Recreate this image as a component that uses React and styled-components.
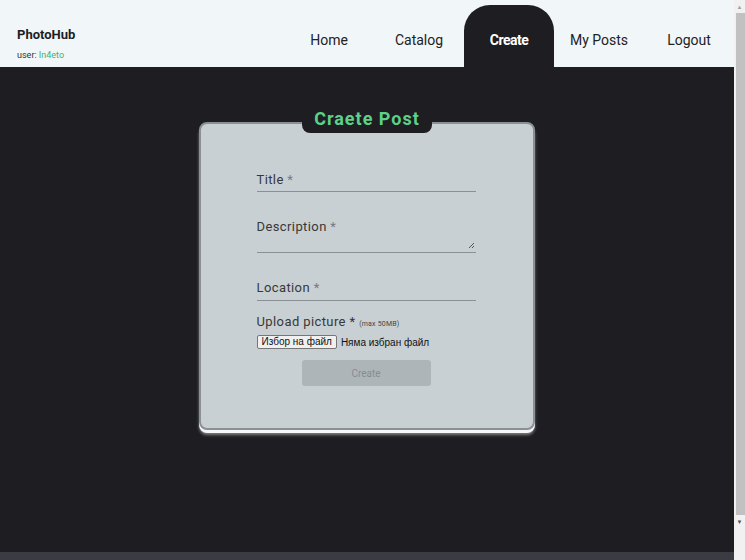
import React from 'react';
import styled, { createGlobalStyle } from 'styled-components';

const GlobalStyle = createGlobalStyle`
  body {
    margin: 0;
    font-family: Roboto, "Liberation Sans", sans-serif;
    background: #1e1d22;
  }
`;

const Viewport = styled.div`
  display: flex;
  height: 560px;
  overflow: hidden;
`;

const Page = styled.div`
  flex: 1;
  display: flex;
  flex-direction: column;
  min-height: 596px;
`;

const Rail = styled.div`
  width: 11px;
  background: #f1f1f1;
  display: flex;
  flex-direction: column;
  align-items: center;
`;

const Arrow = styled.div`
  height: 13px;
  display: flex;
  align-items: center;
  justify-content: center;
  color: ${(p) => p.$color};
  font-size: 6px;
  line-height: 1;
`;

const Thumb = styled.div`
  align-self: flex-end;
  width: 9px;
  height: 502px;
  background: #c1c1c1;
`;

const Header = styled.header`
  height: 67px;
  background: #f1f6f9;
  display: flex;
  justify-content: space-between;
`;

const Brand = styled.div`
  padding: 27px 0 0 17px;
`;

const Logo = styled.div`
  font-size: 13px;
  font-weight: 700;
  color: #1d1d1f;
`;

const User = styled.div`
  margin-top: 8px;
  font-size: 9px;
  color: #333;

  span {
    color: #3cb371;
  }
`;

const Nav = styled.nav`
  display: flex;
  padding-top: 5px;
`;

const NavItem = styled.a`
  width: 90px;
  padding-top: 27px;
  text-align: center;
  font-size: 14px;
  line-height: 17px;
  color: ${(p) => (p.$active ? '#fff' : '#222')};
  font-weight: ${(p) => (p.$active ? 700 : 400)};
  background: ${(p) => (p.$active ? '#1e1d22' : 'transparent')};
  border-radius: 26px 26px 0 0;
  letter-spacing: ${(p) => (p.$active ? '-0.5px' : '0')};
  cursor: pointer;
`;

const Main = styled.main`
  height: 485px;
  background: #1e1d22;
  display: flex;
  justify-content: center;
  align-items: flex-start;
`;

const Card = styled.section`
  position: relative;
  margin-top: 55px;
  width: 336px;
  height: 308px;
  box-sizing: border-box;
  background: #c8d0d3;
  border: 2px solid #8b9094;
  border-radius: 8px;
  box-shadow: 0 3px 0 #f4f6f7, 0 5px 3px rgba(150, 150, 150, 0.8);
`;

const Tab = styled.h2`
  position: absolute;
  top: -14px;
  left: 101px;
  width: 130px;
  height: 23px;
  margin: 0;
  background: #1e1d22;
  border-radius: 0 0 8px 8px;
  color: #5dd08a;
  font-size: 18px;
  font-weight: 700;
  letter-spacing: 1px;
  line-height: 18px;
  text-align: center;
`;

const Form = styled.form`
  width: 219px;
  margin: 0 auto;
  padding-top: 48px;
  transform: translateX(-1px);
  display: flex;
  flex-direction: column;
`;

const Field = styled.div`
  height: ${(p) => p.$h}px;
  margin-top: ${(p) => p.$gap}px;
  border-bottom: 1px solid #8b9094;
  position: relative;
`;

const Label = styled.label`
  display: block;
  font-size: 13px;
  line-height: 15px;
  color: #383838;
  letter-spacing: 0.4px;

  i {
    font-style: normal;
    color: ${(p) => (p.$darkStar ? '#333' : '#7a7a7a')};
  }

  small {
    font-size: 7px;
    letter-spacing: 0.2px;
    color: #444;
  }
`;

const Grip = styled.svg`
  position: absolute;
  right: 1px;
  bottom: 3px;
`;

const Upload = styled.div`
  margin-top: 13px;
`;

const FileRow = styled.div`
  display: flex;
  align-items: center;
  margin-top: 3px;
  font-family: "Liberation Sans", Arial, sans-serif;
  font-size: 10px;
  color: #111;
`;

const FileButton = styled.span`
  display: inline-block;
  padding: 0 4px;
  margin-right: 4px;
  background: #f0f0f0;
  border: 1px solid #767676;
  border-radius: 2px;
  line-height: 12px;
`;

const Submit = styled.button`
  align-self: center;
  margin-top: 11px;
  width: 129px;
  height: 26px;
  border: none;
  border-radius: 3px;
  background: #aeb5b8;
  color: #868c90;
  font-family: Roboto, sans-serif;
  font-size: 10px;
`;

const Footer = styled.footer`
  flex: 1;
  background: #3b3b44;
`;

const App = () => {
  return (
    <Viewport>
      <GlobalStyle />
      <Page>
        <Header>
          <Brand>
            <Logo>PhotoHub</Logo>
            <User>
              user: <span>In4eto</span>
            </User>
          </Brand>
          <Nav>
            <NavItem>Home</NavItem>
            <NavItem>Catalog</NavItem>
            <NavItem $active>Create</NavItem>
            <NavItem>My Posts</NavItem>
            <NavItem>Logout</NavItem>
          </Nav>
        </Header>
        <Main>
          <Card>
            <Tab>Craete Post</Tab>
            <Form>
              <Field $h={19} $gap={0}>
                <Label>
                  Title <i>*</i>
                </Label>
              </Field>
              <Field $h={33} $gap={27}>
                <Label>
                  Description <i>*</i>
                </Label>
                <Grip width="7" height="7" viewBox="0 0 7 7">
                  <path d="M6 1L1 6M6 4L4 6" stroke="#555" strokeWidth="1" />
                </Grip>
              </Field>
              <Field $h={20} $gap={27}>
                <Label>
                  Location <i>*</i>
                </Label>
              </Field>
              <Upload>
                <Label $darkStar>
                  Upload picture <i>*</i> <small>(max 50MB)</small>
                </Label>
                <FileRow>
                  <FileButton>Избор на файл</FileButton>
                  Няма избран файл
                </FileRow>
              </Upload>
              <Submit type="button">Create</Submit>
            </Form>
          </Card>
        </Main>
        <Footer />
      </Page>
      <Rail>
        <Arrow $color="#a3a3a3">▲</Arrow>
        <Thumb />
        <Arrow $color="#505050">▼</Arrow>
      </Rail>
    </Viewport>
  );
};

export default App;
